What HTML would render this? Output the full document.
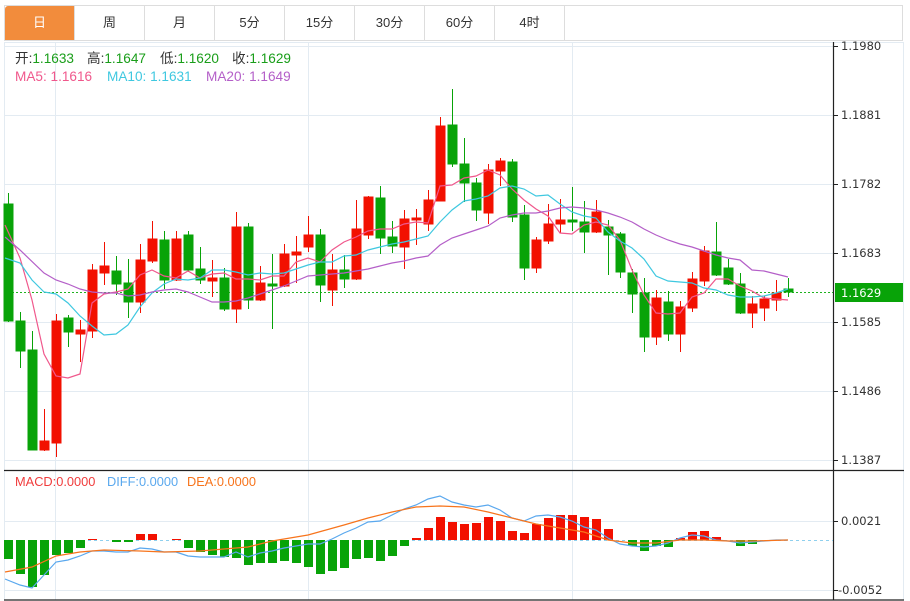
<!DOCTYPE html>
<html><head><meta charset="utf-8"><style>
body{margin:0;background:#fff;width:910px;height:601px;overflow:hidden;font-family:"Liberation Sans","Noto Sans CJK SC",sans-serif}
.tabs{position:absolute;left:4px;top:5px;height:36px;width:899px;border:1px solid #ddd;border-bottom:1px solid #ddd;display:flex;box-sizing:border-box}
.tabs div{width:70px;border-right:1px solid #ddd;text-align:center;line-height:34px;font-size:13px;color:#333;box-sizing:border-box}
.tabs div.a{background:#f28c3c;color:#fff;border-radius:3px 0 0 0}
svg{position:absolute;left:0;top:0}
.r{fill:#f21000;stroke:#f21000}.g{fill:#08a308;stroke:#08a308}
.ax{font-family:"DejaVu Sans",sans-serif;font-size:11.5px;fill:#333}
</style></head><body>
<div class="tabs"><div class="a">日</div><div>周</div><div>月</div><div>5分</div><div>15分</div><div>30分</div><div>60分</div><div>4时</div></div>
<svg width="910" height="601" viewBox="0 0 910 601">
<g stroke="#e3ebf2" stroke-width="1">
<line x1="4" y1="46.5" x2="833" y2="46.5"/><line x1="4" y1="115.5" x2="833" y2="115.5"/><line x1="4" y1="184.5" x2="833" y2="184.5"/><line x1="4" y1="253.5" x2="833" y2="253.5"/><line x1="4" y1="322.5" x2="833" y2="322.5"/><line x1="4" y1="391.5" x2="833" y2="391.5"/><line x1="4" y1="460.5" x2="833" y2="460.5"/>
<line x1="4" y1="521.5" x2="833" y2="521.5"/><line x1="4" y1="590.5" x2="833" y2="590.5"/>
<line x1="55.5" y1="42" x2="55.5" y2="600"/><line x1="308.5" y1="42" x2="308.5" y2="600"/><line x1="572.5" y1="42" x2="572.5" y2="600"/>
<line x1="4.5" y1="42" x2="4.5" y2="600"/><line x1="903.5" y1="42" x2="903.5" y2="600"/>
<line x1="4" y1="42.5" x2="904" y2="42.5"/>
</g>
<g stroke="#222" stroke-width="1.2"><line x1="833.5" y1="42" x2="833.5" y2="600"/><line x1="4" y1="470.5" x2="904" y2="470.5"/><line x1="4" y1="600" x2="904" y2="600"/></g>
<g stroke="#222"><line x1="833" y1="46.5" x2="838" y2="46.5"/><line x1="833" y1="115.5" x2="838" y2="115.5"/><line x1="833" y1="184.5" x2="838" y2="184.5"/><line x1="833" y1="253.5" x2="838" y2="253.5"/><line x1="833" y1="322.5" x2="838" y2="322.5"/><line x1="833" y1="391.5" x2="838" y2="391.5"/><line x1="833" y1="460.5" x2="838" y2="460.5"/><line x1="833" y1="521.5" x2="838" y2="521.5"/><line x1="833" y1="590.5" x2="838" y2="590.5"/></g>
<g class="ax"><text x="841" y="50">1.1980</text><text x="841" y="119">1.1881</text><text x="841" y="188">1.1782</text><text x="841" y="257">1.1683</text><text x="841" y="326">1.1585</text><text x="841" y="395">1.1486</text><text x="841" y="464">1.1387</text><text x="841" y="525">0.0021</text><text x="838" y="594">-0.0052</text></g>
<rect x="835" y="283" width="68" height="19" fill="#08a308"/><text x="841" y="297" class="ax" style="fill:#fff">1.1629</text>
<line x1="4" y1="292.5" x2="833" y2="292.5" stroke="#1fb31f" stroke-dasharray="2,2"/>
<line x1="4" y1="540.5" x2="833" y2="540.5" stroke="#8fd0ee" stroke-dasharray="3,3"/>
<g stroke-width="1">
<g class="g"><line x1="8.5" y1="193" x2="8.5" y2="322"/><rect x="4" y="204" width="9" height="117"/></g>
<g class="g"><line x1="20.5" y1="312" x2="20.5" y2="368"/><rect x="16" y="321" width="9" height="30"/></g>
<g class="g"><line x1="32.5" y1="331" x2="32.5" y2="450"/><rect x="28" y="350" width="9" height="100"/></g>
<g class="r"><line x1="44.5" y1="409" x2="44.5" y2="451"/><rect x="40" y="441" width="9" height="9"/></g>
<g class="r"><line x1="56.5" y1="314" x2="56.5" y2="457"/><rect x="52" y="321" width="9" height="122"/></g>
<g class="g"><line x1="68.5" y1="315" x2="68.5" y2="347"/><rect x="64" y="318" width="9" height="14"/></g>
<g class="r"><line x1="80.5" y1="320" x2="80.5" y2="362"/><rect x="76" y="330" width="9" height="4"/></g>
<g class="r"><line x1="92.5" y1="264" x2="92.5" y2="338"/><rect x="88" y="270" width="9" height="61"/></g>
<g class="r"><line x1="104.5" y1="242" x2="104.5" y2="285"/><rect x="100" y="266" width="9" height="7"/></g>
<g class="g"><line x1="116.5" y1="256" x2="116.5" y2="295"/><rect x="112" y="271" width="9" height="13"/></g>
<g class="g"><line x1="128.5" y1="259" x2="128.5" y2="318"/><rect x="124" y="283" width="9" height="19"/></g>
<g class="r"><line x1="140.5" y1="244" x2="140.5" y2="313"/><rect x="136" y="260" width="9" height="42"/></g>
<g class="r"><line x1="152.5" y1="221" x2="152.5" y2="263"/><rect x="148" y="239" width="9" height="22"/></g>
<g class="g"><line x1="164.5" y1="231" x2="164.5" y2="289"/><rect x="160" y="240" width="9" height="40"/></g>
<g class="r"><line x1="176.5" y1="231" x2="176.5" y2="281"/><rect x="172" y="239" width="9" height="41"/></g>
<g class="g"><line x1="188.5" y1="231" x2="188.5" y2="272"/><rect x="184" y="235" width="9" height="35"/></g>
<g class="g"><line x1="200.5" y1="247" x2="200.5" y2="284"/><rect x="196" y="269" width="9" height="11"/></g>
<g class="r"><line x1="212.5" y1="260" x2="212.5" y2="297"/><rect x="208" y="278" width="9" height="3"/></g>
<g class="g"><line x1="224.5" y1="268" x2="224.5" y2="311"/><rect x="220" y="278" width="9" height="31"/></g>
<g class="r"><line x1="236.5" y1="212" x2="236.5" y2="323"/><rect x="232" y="227" width="9" height="82"/></g>
<g class="g"><line x1="248.5" y1="223" x2="248.5" y2="309"/><rect x="244" y="227" width="9" height="73"/></g>
<g class="r"><line x1="260.5" y1="266" x2="260.5" y2="301"/><rect x="256" y="283" width="9" height="17"/></g>
<g class="g"><line x1="272.5" y1="254" x2="272.5" y2="329"/><rect x="268" y="284" width="9" height="2"/></g>
<g class="r"><line x1="284.5" y1="244" x2="284.5" y2="287"/><rect x="280" y="254" width="9" height="32"/></g>
<g class="r"><line x1="296.5" y1="236" x2="296.5" y2="283"/><rect x="292" y="252" width="9" height="3"/></g>
<g class="r"><line x1="308.5" y1="216" x2="308.5" y2="252"/><rect x="304" y="235" width="9" height="12"/></g>
<g class="g"><line x1="320.5" y1="229" x2="320.5" y2="302"/><rect x="316" y="235" width="9" height="50"/></g>
<g class="r"><line x1="332.5" y1="254" x2="332.5" y2="306"/><rect x="328" y="270" width="9" height="20"/></g>
<g class="g"><line x1="344.5" y1="255" x2="344.5" y2="288"/><rect x="340" y="270" width="9" height="9"/></g>
<g class="r"><line x1="356.5" y1="200" x2="356.5" y2="280"/><rect x="352" y="229" width="9" height="50"/></g>
<g class="r"><line x1="368.5" y1="196" x2="368.5" y2="239"/><rect x="364" y="197" width="9" height="38"/></g>
<g class="g"><line x1="380.5" y1="186" x2="380.5" y2="254"/><rect x="376" y="198" width="9" height="40"/></g>
<g class="g"><line x1="392.5" y1="221" x2="392.5" y2="253"/><rect x="388" y="237" width="9" height="9"/></g>
<g class="r"><line x1="404.5" y1="210" x2="404.5" y2="269"/><rect x="400" y="219" width="9" height="28"/></g>
<g class="r"><line x1="416.5" y1="209" x2="416.5" y2="245"/><rect x="412" y="218" width="9" height="2"/></g>
<g class="r"><line x1="428.5" y1="190" x2="428.5" y2="231"/><rect x="424" y="200" width="9" height="24"/></g>
<g class="r"><line x1="440.5" y1="117" x2="440.5" y2="201"/><rect x="436" y="126" width="9" height="75"/></g>
<g class="g"><line x1="452.5" y1="89" x2="452.5" y2="167"/><rect x="448" y="125" width="9" height="39"/></g>
<g class="g"><line x1="464.5" y1="138" x2="464.5" y2="202"/><rect x="460" y="164" width="9" height="19"/></g>
<g class="g"><line x1="476.5" y1="178" x2="476.5" y2="221"/><rect x="472" y="183" width="9" height="27"/></g>
<g class="r"><line x1="488.5" y1="164" x2="488.5" y2="224"/><rect x="484" y="170" width="9" height="43"/></g>
<g class="r"><line x1="500.5" y1="158" x2="500.5" y2="186"/><rect x="496" y="161" width="9" height="10"/></g>
<g class="g"><line x1="512.5" y1="159" x2="512.5" y2="222"/><rect x="508" y="162" width="9" height="55"/></g>
<g class="g"><line x1="524.5" y1="205" x2="524.5" y2="280"/><rect x="520" y="215" width="9" height="53"/></g>
<g class="r"><line x1="536.5" y1="237" x2="536.5" y2="273"/><rect x="532" y="240" width="9" height="28"/></g>
<g class="r"><line x1="548.5" y1="204" x2="548.5" y2="244"/><rect x="544" y="224" width="9" height="17"/></g>
<g class="r"><line x1="560.5" y1="199" x2="560.5" y2="233"/><rect x="556" y="220" width="9" height="4"/></g>
<g class="g"><line x1="572.5" y1="187" x2="572.5" y2="231"/><rect x="568" y="220" width="9" height="2"/></g>
<g class="g"><line x1="584.5" y1="201" x2="584.5" y2="253"/><rect x="580" y="222" width="9" height="10"/></g>
<g class="r"><line x1="596.5" y1="200" x2="596.5" y2="233"/><rect x="592" y="212" width="9" height="20"/></g>
<g class="g"><line x1="608.5" y1="220" x2="608.5" y2="275"/><rect x="604" y="227" width="9" height="8"/></g>
<g class="g"><line x1="620.5" y1="232" x2="620.5" y2="278"/><rect x="616" y="234" width="9" height="38"/></g>
<g class="g"><line x1="632.5" y1="269" x2="632.5" y2="313"/><rect x="628" y="273" width="9" height="21"/></g>
<g class="g"><line x1="644.5" y1="278" x2="644.5" y2="352"/><rect x="640" y="293" width="9" height="44"/></g>
<g class="r"><line x1="656.5" y1="290" x2="656.5" y2="345"/><rect x="652" y="298" width="9" height="39"/></g>
<g class="g"><line x1="668.5" y1="291" x2="668.5" y2="341"/><rect x="664" y="302" width="9" height="32"/></g>
<g class="r"><line x1="680.5" y1="301" x2="680.5" y2="352"/><rect x="676" y="307" width="9" height="27"/></g>
<g class="r"><line x1="692.5" y1="272" x2="692.5" y2="312"/><rect x="688" y="279" width="9" height="29"/></g>
<g class="r"><line x1="704.5" y1="246" x2="704.5" y2="286"/><rect x="700" y="251" width="9" height="30"/></g>
<g class="g"><line x1="716.5" y1="222" x2="716.5" y2="276"/><rect x="712" y="252" width="9" height="23"/></g>
<g class="g"><line x1="728.5" y1="259" x2="728.5" y2="285"/><rect x="724" y="268" width="9" height="16"/></g>
<g class="g"><line x1="740.5" y1="273" x2="740.5" y2="314"/><rect x="736" y="284" width="9" height="29"/></g>
<g class="r"><line x1="752.5" y1="296" x2="752.5" y2="328"/><rect x="748" y="304" width="9" height="9"/></g>
<g class="r"><line x1="764.5" y1="296" x2="764.5" y2="321"/><rect x="760" y="299" width="9" height="9"/></g>
<g class="r"><line x1="776.5" y1="280" x2="776.5" y2="311"/><rect x="772" y="293" width="9" height="7"/></g>
<g class="g"><line x1="788.5" y1="278" x2="788.5" y2="297"/><rect x="784" y="289" width="9" height="3"/></g>
</g>
<g fill="none" stroke-width="1.2">
<polyline stroke="#f0588c" points="5,225 20,258 32,300 44,354 56,376 68,378 80,374 92,303 104,294 116,292 128,289 140,275 152,270 164,276 176,278 188,271 200,278 212,274 224,273 236,279 248,279 260,280 272,276 284,276 296,262 308,258 320,262 332,250 344,242 356,237 368,231 380,229 392,229 404,224 416,222 428,223 440,186 452,185 464,178 476,176 488,170 500,175 512,189 524,200 536,209 548,216 560,233 572,234 584,225 596,222 608,225 620,240 632,270 644,295 656,313 668,314 680,313 692,297 704,293 716,279 728,279 740,286 752,291 764,298 776,299 788,300"/>
<polyline stroke="#3fc8e0" points="5,258 20,263 32,280 44,292 56,294 68,303 80,316 92,326 104,335 116,334 128,325 140,307 152,293 164,284 176,279 188,280 200,278 212,270 224,270 236,272 248,275 260,273 272,274 284,273 296,269 308,265 320,262 332,262 344,256 356,255 368,250 380,247 392,244 404,242 416,239 428,236 440,222 452,210 464,201 476,199 488,196 500,188 512,186 524,189 536,196 548,195 560,204 572,212 584,216 596,218 608,232 620,241 632,248 644,259 656,276 668,281 680,282 692,283 704,288 716,290 728,295 740,297 752,297 764,296 776,293 788,289"/>
<polyline stroke="#b45fc8" points="5,237 20,250 44,273 56,280 68,284 80,289 92,292 104,293 116,293 128,296 140,295 152,292 164,290 176,289 188,292 200,297 212,302 224,302 236,301 248,298 260,294 272,290 284,286 296,281 308,276 320,275 332,274 344,273 356,271 368,269 380,266 392,263 404,261 416,258 428,256 440,245 452,238 464,234 476,230 488,226 500,218 512,215 524,213 536,213 548,211 560,208 572,207 584,208 596,210 608,213 620,217 632,222 644,229 656,235 668,240 680,244 692,247 704,251 716,255 728,258 740,260 752,270 764,271 776,274 788,277"/>
</g>
<g>
<g fill="#08a308"><rect x="4" y="540" width="9" height="19"/><rect x="16" y="540" width="9" height="34"/><rect x="28" y="540" width="9" height="47"/><rect x="40" y="540" width="9" height="35"/><rect x="52" y="540" width="9" height="15"/><rect x="64" y="540" width="9" height="13"/><rect x="76" y="540" width="9" height="8"/><rect x="112" y="540" width="9" height="2"/><rect x="124" y="540" width="9" height="2"/><rect x="184" y="540" width="9" height="8"/><rect x="196" y="540" width="9" height="12"/><rect x="208" y="540" width="9" height="15"/><rect x="220" y="540" width="9" height="17"/><rect x="232" y="540" width="9" height="18"/><rect x="244" y="540" width="9" height="25"/><rect x="256" y="540" width="9" height="23"/><rect x="268" y="540" width="9" height="23"/><rect x="280" y="540" width="9" height="21"/><rect x="292" y="540" width="9" height="23"/><rect x="304" y="540" width="9" height="27"/><rect x="316" y="540" width="9" height="34"/><rect x="328" y="540" width="9" height="31"/><rect x="340" y="540" width="9" height="28"/><rect x="352" y="540" width="9" height="19"/><rect x="364" y="540" width="9" height="18"/><rect x="376" y="540" width="9" height="21"/><rect x="388" y="540" width="9" height="16"/><rect x="400" y="540" width="9" height="6"/><rect x="628" y="540" width="9" height="6"/><rect x="640" y="540" width="9" height="11"/><rect x="652" y="540" width="9" height="6"/><rect x="664" y="540" width="9" height="7"/><rect x="736" y="540" width="9" height="6"/><rect x="748" y="540" width="9" height="4"/></g>
<g fill="#f21000"><rect x="88" y="539" width="9" height="1"/><rect x="136" y="534" width="9" height="6"/><rect x="148" y="534" width="9" height="6"/><rect x="172" y="539" width="9" height="1"/><rect x="412" y="538" width="9" height="2"/><rect x="424" y="528" width="9" height="12"/><rect x="436" y="517" width="9" height="23"/><rect x="448" y="522" width="9" height="18"/><rect x="460" y="524" width="9" height="16"/><rect x="472" y="523" width="9" height="17"/><rect x="484" y="517" width="9" height="23"/><rect x="496" y="521" width="9" height="19"/><rect x="508" y="531" width="9" height="9"/><rect x="520" y="533" width="9" height="7"/><rect x="532" y="524" width="9" height="16"/><rect x="544" y="518" width="9" height="22"/><rect x="556" y="515" width="9" height="25"/><rect x="568" y="515" width="9" height="25"/><rect x="580" y="517" width="9" height="23"/><rect x="592" y="519" width="9" height="21"/><rect x="604" y="529" width="9" height="11"/><rect x="676" y="538" width="9" height="2"/><rect x="688" y="532" width="9" height="8"/><rect x="700" y="531" width="9" height="9"/><rect x="712" y="537" width="9" height="3"/></g>
</g>
<g fill="none" stroke-width="1.2">
<polyline stroke="#5aa8ee" points="5,579 20,585 32,588 44,575 56,562 68,560 80,556 92,551 104,551 116,552 128,552 140,548 152,549 164,552 176,552 188,556 200,557 212,557 224,557 236,552 248,557 260,553 272,551 284,548 296,546 308,544 320,544 332,539 344,533 356,528 368,522 380,521 392,515 404,509 416,505 428,499 440,496 452,502 464,505 476,507 488,505 500,510 512,518 524,521 536,516 548,515 560,517 572,521 584,527 596,530 608,538 620,544 632,546 644,547 656,546 668,543 680,538 692,535 704,536 716,540 728,541 740,543 752,542 764,541 776,540 788,540"/>
<polyline stroke="#f7741c" points="5,572 32,567 56,556 80,552 104,550 140,551 164,552 200,551 224,549 248,547 272,541 308,535 344,525 368,518 392,512 416,507 440,506 464,507 488,512 512,518 536,524 560,528 584,532 608,540 632,543 656,543 680,540 704,540 728,541 752,541 788,540"/>
</g>
<g font-size="13.6" font-family="Liberation Sans,Noto Sans CJK SC,sans-serif">
<text x="15" y="63"><tspan fill="#333">开:</tspan><tspan fill="#1a9e1a">1.1633</tspan><tspan fill="#333" x="87">高:</tspan><tspan fill="#1a9e1a">1.1647</tspan><tspan fill="#333" x="160">低:</tspan><tspan fill="#1a9e1a">1.1620</tspan><tspan fill="#333" x="232">收:</tspan><tspan fill="#1a9e1a">1.1629</tspan></text>
<text x="15" y="81"><tspan fill="#f0588c">MA5: 1.1616</tspan><tspan fill="#3fc8e0" x="107">MA10: 1.1631</tspan><tspan fill="#b45fc8" x="206">MA20: 1.1649</tspan></text>
<text x="15" y="486" font-size="12.8"><tspan fill="#f03c3c">MACD:0.0000</tspan><tspan fill="#5aa8ee" x="107">DIFF:0.0000</tspan><tspan fill="#f7741c" x="187">DEA:0.0000</tspan></text>
</g>
</svg>
</body></html>
